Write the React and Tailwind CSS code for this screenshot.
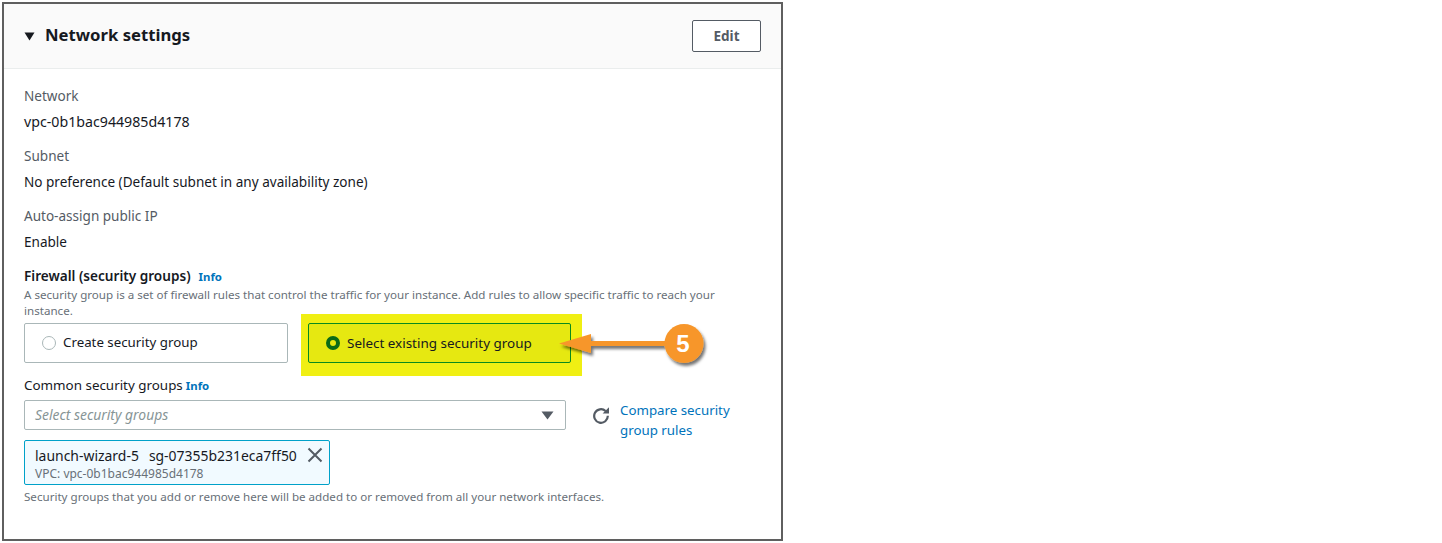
function Field({ label, value, wide }) {
  return (
    <div className="mb-[14px]">
      <div className="text-[13.55px] leading-[20px] text-[#545b64] mb-[6px]">{label}</div>
      <div className={`${wide ? 'text-[14.2px]' : 'text-[13.55px]'} leading-[20px] text-[#16191f]`}>{value}</div>
    </div>
  )
}

function Callout() {
  return (
    <svg className="absolute left-[556px] top-[324px]" width="156" height="46" viewBox="0 0 156 46">
      <defs>
        <filter id="sh" x="-20%" y="-30%" width="140%" height="170%">
          <feDropShadow dx="2" dy="3" stdDeviation="1.6" floodColor="#000" floodOpacity="0.55" />
        </filter>
      </defs>
      <g filter="url(#sh)">
        <path d="M3 19.5 L35 10 L35 17 L112 17 L112 22 L35 22 L35 29 Z" fill="#f7962a" />
        <circle cx="128" cy="19.5" r="19.5" fill="#f7962a" />
      </g>
    </svg>
  )
}

export default function App() {
  return (
    <div className="relative w-[785px] h-[543px] bg-white font-['Noto_Sans','Open_Sans',sans-serif] p-[2px]">
      <div className="border-2 border-[#5f5f5f] h-[539px] w-[781px]">
        <div className="h-[65px] bg-[#fafafa] border-b border-[#eaeded] flex items-center justify-between pl-[20px] pr-[20px]">
          <div className="flex items-center">
            <svg width="11" height="9" viewBox="0 0 11 9" className="mr-[10px]">
              <path d="M0.5 0.5 H10.5 L5.5 8.5 Z" fill="#16191f" />
            </svg>
            <h2 className="text-[16.7px] leading-[22px] font-bold text-[#16191f] -mt-[3px]">Network settings</h2>
          </div>
          <button className="w-[69px] h-[32px] bg-white border border-[#545b64] rounded-[2px] text-[13.5px] font-bold text-[#545b64] pt-[1px]">Edit</button>
        </div>

        <div className="pl-[20px] pt-[17px] pr-[20px]">
          <Field label="Network" value="vpc-0b1bac944985d4178" wide />
          <Field label="Subnet" value="No preference (Default subnet in any availability zone)" />
          <Field label="Auto-assign public IP" value="Enable" />

          <div className="mt-[15px] text-[13.6px] leading-[18px] font-semibold text-[#16191f]">
            Firewall (security groups)
            <span className="ml-[8px] text-[11.4px] font-bold text-[#0073bb]">Info</span>
          </div>
          <p className="text-[11.6px] leading-[16px] text-[#687078] w-[700px] mt-[1px]">
            A security group is a set of firewall rules that control the traffic for your instance. Add rules to allow specific traffic to reach your instance.
          </p>

          <div className="flex mt-[4px]">
            <div className="w-[264px] h-[40px] border border-[#aab7b8] rounded-[2px] flex items-center pl-[17px] text-[13.3px] text-[#16191f]">
              <span className="w-[14px] h-[14px] rounded-full border-[1.5px] border-[#aab7b8] mr-[7px]" />
              Create security group
            </div>
            <div className="ml-[13px] -mt-[9px] -mb-[13px] w-[281px] bg-[#f0ef13] pt-[9px] px-[7px]">
              <div className="w-[263px] h-[40px] border border-[#0a8a1e] bg-[#e6e811] rounded-[2px] flex items-center pl-[17px] text-[13.45px] text-[#16191f]">
                <span className="w-[14px] h-[14px] rounded-full border-[4px] border-[#0b6b16] bg-[#e6e811] mr-[7px]" />
                Select existing security group
              </div>
            </div>
          </div>

          <div className="mt-[12px] text-[13.4px] leading-[20px] text-[#16191f]">
            Common security groups
            <span className="ml-[3px] text-[11.4px] font-bold text-[#0073bb]">Info</span>
          </div>

          <div className="flex items-start h-[30px] mt-[4px]">
            <div className="w-[542px] h-[30px] border border-[#aab7b8] rounded-[2px] flex items-center justify-between pl-[10px] pr-[11px]">
              <span className="text-[13.9px] italic text-[#879596]">Select security groups</span>
              <svg width="13" height="9" viewBox="0 0 13 9"><path d="M0.5 0.5 H12.5 L6.5 8.5 Z" fill="#545b64" /></svg>
            </div>
            <svg width="18" height="18" viewBox="0 0 18 18" fill="none" className="ml-[26px] mt-[6px]">
              <path d="M13.6 5 A6.8 6.8 0 1 0 15.8 9.8" stroke="#545b64" strokeWidth="2.2" />
              <path d="M17 1.2 V7.6 H10.6 Z" fill="#545b64" />
            </svg>
            <a className="ml-[10px] mt-[0px] w-[125px] shrink-0 text-[13.3px] leading-[20px] text-[#0073bb]">Compare security group rules</a>
          </div>

          <div className="mt-[10px] w-[306px] h-[45px] border border-[#00a1c9] bg-[#f1faff] rounded-[2px] relative pl-[10px] pt-[5px]">
            <div className="flex text-[13.95px] leading-[20px] text-[#16191f] gap-[10px]">
              <span>launch-wizard-5</span>
              <span>sg-07355b231eca7ff50</span>
            </div>
            <div className="text-[12px] leading-[15px] text-[#687078]">VPC: vpc-0b1bac944985d4178</div>
            <svg width="16" height="16" viewBox="0 0 16 16" stroke="#545b64" strokeWidth="2" fill="none" className="absolute right-[6px] top-[6px]">
              <path d="M1.5 1.5 L14.5 14.5 M14.5 1.5 L1.5 14.5" />
            </svg>
          </div>
          <p className="mt-[4px] text-[11.6px] leading-[16px] text-[#687078]">
            Security groups that you add or remove here will be added to or removed from all your network interfaces.
          </p>
        </div>
      </div>

      <Callout />
      <div className="absolute left-[664px] top-[325px] w-[38px] h-[38px] flex items-center justify-center text-[24px] font-bold text-white font-['Liberation_Sans',sans-serif]">5</div>
    </div>
  )
}
